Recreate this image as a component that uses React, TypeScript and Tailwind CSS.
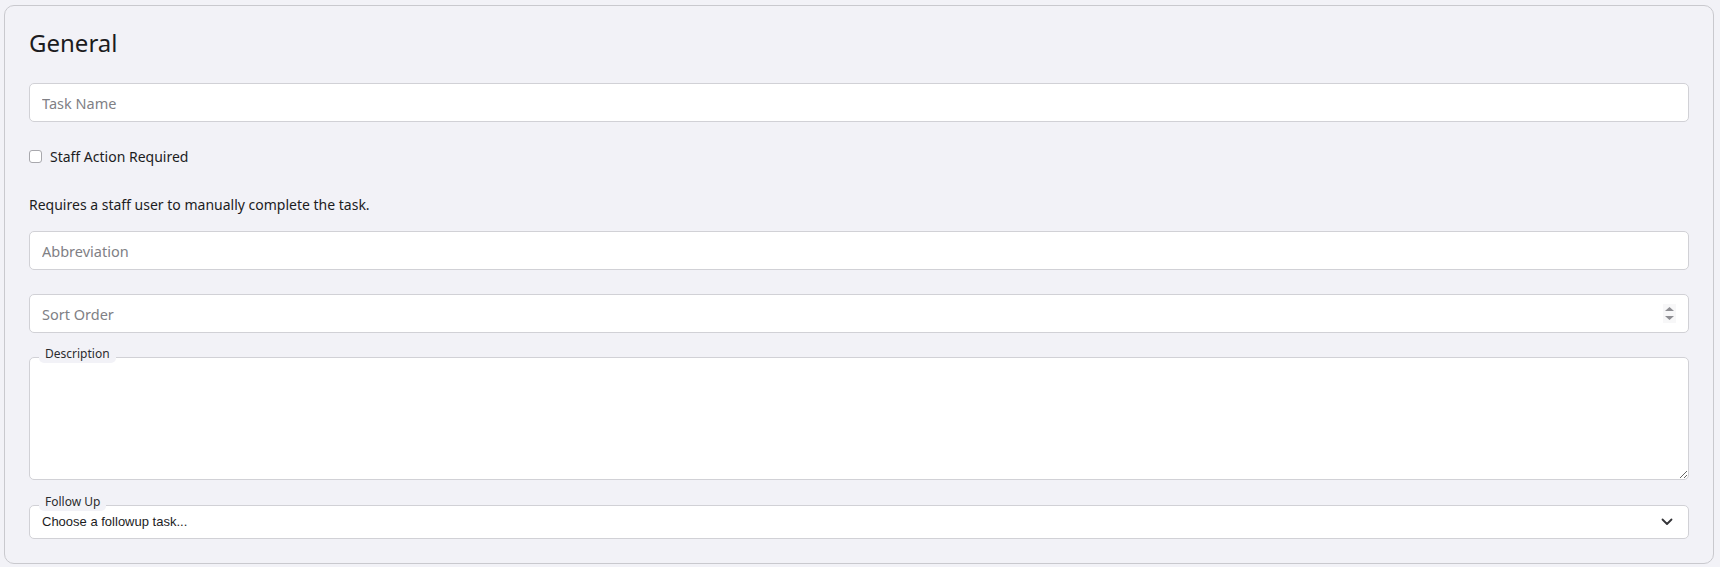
import React from "react";

const font = { fontFamily: '"Noto Sans", "Open Sans", sans-serif' };

export default function App() {
  return (
    <div className="w-[1720px] h-[567px] bg-[#f2f2f7] pt-[5px] pl-[4px] overflow-hidden" style={font}>
      <div className="w-[1710px] h-[559px] border border-[#c9c9ce] rounded-[10px] bg-[#f2f2f7] p-6 flex flex-col">
        <h2 className="-mt-[2px] text-[24px] leading-[29px] text-[#1c1c1e] font-normal">General</h2>

        <input
          className="mt-[26px] h-[39px] w-full bg-white border border-[#d1d1d6] rounded-[5px] px-3 text-[14.5px] text-[#1c1c1e] placeholder:text-[#808085] outline-none"
          placeholder="Task Name"
          style={font}
        />

        <label className="mt-[24px] h-[21px] flex items-center text-[14px] leading-[21px] text-[#1c1c1e]">
          <span className="w-[13px] h-[13px] border border-[#a8a8ad] rounded-[3px] bg-white shrink-0" />
          <span className="ml-[8px]">Staff Action Required</span>
        </label>

        <p className="mt-[27px] text-[14px] leading-[21px] text-[#1c1c1e]">
          Requires a staff user to manually complete the task.
        </p>

        <input
          className="mt-[16px] h-[39px] w-full bg-white border border-[#d1d1d6] rounded-[5px] px-3 text-[14.5px] text-[#1c1c1e] placeholder:text-[#808085] outline-none"
          placeholder="Abbreviation"
          style={font}
        />

        <div className="relative mt-[24px] h-[39px] w-full bg-white border border-[#d1d1d6] rounded-[5px] flex items-center">
          <input
            className="h-full flex-1 bg-transparent px-3 text-[14.5px] text-[#1c1c1e] placeholder:text-[#808085] outline-none"
            placeholder="Sort Order"
            style={font}
          />
          <div className="mr-[12px] w-[13px] h-[19px] bg-[#f7f7f8] flex flex-col items-center justify-center gap-[5px]">
            <svg width="9" height="4" viewBox="0 0 9 4">
              <path d="M0 4 L4.5 0 L9 4 Z" fill="#8e8e93" />
            </svg>
            <svg width="9" height="4" viewBox="0 0 9 4">
              <path d="M0 0 L4.5 4 L9 0 Z" fill="#8e8e93" />
            </svg>
          </div>
        </div>

        <div className="relative mt-[24px] h-[123px] w-full">
          <textarea
            className="block w-full h-full bg-white border border-[#d1d1d6] rounded-[5px] px-3 py-2 text-[14px] outline-none"
            style={font}
          />
          <span className="absolute left-[10px] top-[-14px] h-[20px] pt-[2px] px-[6px] bg-[#f2f2f7] rounded-b-[5px] text-[12px] leading-[18px] text-[#2c2c2e]">
            Description
          </span>
        </div>

        <div className="relative mt-[25px] h-[34px] w-full bg-white border border-[#d1d1d6] rounded-[5px] flex items-center">
          <span
            className="flex-1 pl-[12px] text-[13px] text-[#1c1c1e]"
            style={{ fontFamily: '"Liberation Sans", Arial, sans-serif' }}
          >
            Choose a followup task...
          </span>
          <svg className="mr-[15px]" width="12" height="8" viewBox="0 0 12 8">
            <path d="M1.5 1.5 L6 6 L10.5 1.5" fill="none" stroke="#343438" strokeWidth="1.8" strokeLinecap="round" strokeLinejoin="round" />
          </svg>
          <span className="absolute left-[9px] top-[-15px] h-[20px] pt-[2px] px-[6px] bg-[#f2f2f7] rounded-b-[5px] text-[12px] leading-[18px] text-[#2c2c2e]">
            Follow Up
          </span>
        </div>
      </div>
    </div>
  );
}
